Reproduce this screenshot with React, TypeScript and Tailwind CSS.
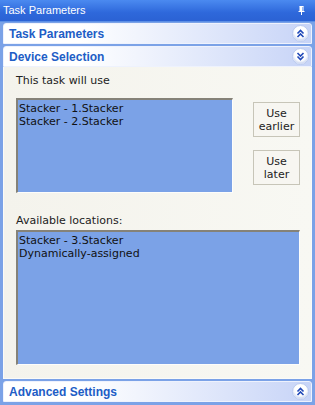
import React from 'react';

const font = { fontFamily: 'Tahoma, "DejaVu Sans", "Liberation Sans", sans-serif' };
const headFont = { fontFamily: 'Tahoma, "Liberation Sans", sans-serif' };

function Chevron({ up }: { up: boolean }) {
  return (
    <div className="w-[17px] h-[17px] rounded-full bg-white border border-[#b9c9ef] flex items-center justify-center shadow-[inset_0_-2px_2px_rgba(160,180,230,0.5)]">
      <svg width="9" height="9" viewBox="0 0 9 9">
        {up ? (
          <g fill="none" stroke="#2149b8" strokeWidth="1.6">
            <path d="M1.5 4.5 L4.5 1.5 L7.5 4.5" />
            <path d="M1.5 8 L4.5 5 L7.5 8" />
          </g>
        ) : (
          <g fill="none" stroke="#2149b8" strokeWidth="1.6">
            <path d="M1.5 1 L4.5 4 L7.5 1" />
            <path d="M1.5 4.5 L4.5 7.5 L7.5 4.5" />
          </g>
        )}
      </svg>
    </div>
  );
}

function Header({ title, up }: { title: string; up: boolean }) {
  return (
    <div className="h-[21px] flex items-center justify-between pl-[5px] pr-[2px] rounded-t-[3px] bg-[linear-gradient(to_right,#ffffff_0%,#ffffff_25%,#c7d4f7_100%)] border border-[#eef2fd]">
      <span style={headFont} className="text-[12px] font-bold text-[#215dc6]">{title}</span>
      <Chevron up={up} />
    </div>
  );
}

function ListBox({ items, className }: { items: string[]; className: string }) {
  return (
    <div className={`bg-[#7ba2e7] border-t-2 border-l-2 border-t-[#858278] border-l-[#858278] border-r border-b border-r-[#fdfdfb] border-b-[#fdfdfb] px-[1px] pt-[2px] text-[11px] leading-[13px] text-[#111] ${className}`}>
      {items.map((t) => (
        <div key={t}>{t}</div>
      ))}
    </div>
  );
}

function Btn({ lines }: { lines: string[] }) {
  return (
    <div className="w-[47px] h-[35px] border border-[#c7c5b8] bg-[#f7f6f1] flex flex-col items-center justify-center text-[11px] leading-[13px] text-[#222]">
      {lines.map((l) => (
        <div key={l}>{l}</div>
      ))}
    </div>
  );
}

export default function App() {
  return (
    <div style={font} className="w-[315px] h-[405px] bg-[#7ba2e7] flex flex-col overflow-hidden">
      <div className="h-[22px] shrink-0 flex items-center justify-between pl-[3px] pr-[10px] bg-[linear-gradient(to_bottom,#4b8af0,#2e68db_60%,#2b62d4)] border-b border-[#5c8fe6]">
        <span className="text-[11px] text-white" style={headFont}>Task Parameters</span>
        <svg width="7" height="9" viewBox="0 0 7 9">
          <path d="M1.5 0.5 H5.5 M2 0.5 V5 M5 0.5 V5 M0.5 5.5 H6.5 M3.5 5.5 V9" stroke="#fff" strokeWidth="1" fill="none" />
          <rect x="2" y="1" width="2" height="4" fill="#fff" />
        </svg>
      </div>
      <div className="flex-1 flex flex-col gap-[1px] px-[3px] pt-[1px] pb-[4px]">
        <Header title="Task Parameters" up />
        <div className="mt-[1px] flex flex-col">
          <Header title="Device Selection" up={false} />
          <div className="h-[312px] bg-[linear-gradient(to_right,#f4f3ec,#f8f8f3)] border-x border-b border-[#fbfbf8] pl-[12px] pt-[7px] text-[11px] text-[#222]">
            <div className="h-[13px] leading-[13px]">This task will use</div>
            <div className="mt-[11px] flex">
              <ListBox items={['Stacker - 1.Stacker', 'Stacker - 2.Stacker']} className="w-[217px] h-[95px]" />
              <div className="ml-[20px] pt-[4px] flex flex-col gap-[13px]">
                <Btn lines={['Use', 'earlier']} />
                <Btn lines={['Use', 'later']} />
              </div>
            </div>
            <div className="mt-[21px] h-[13px] leading-[13px]">Available locations:</div>
            <ListBox items={['Stacker - 3.Stacker', 'Dynamically-assigned']} className="mt-[3px] w-[284px] h-[135px]" />
          </div>
        </div>
        <div className="mt-[1px]">
          <Header title="Advanced Settings" up />
        </div>
      </div>
    </div>
  );
}
